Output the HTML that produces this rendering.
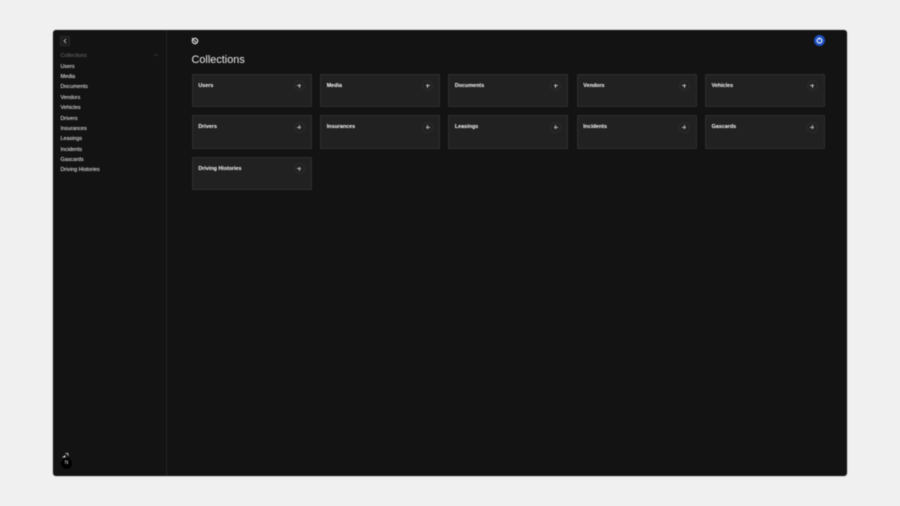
<!DOCTYPE html>
<html>
<head>
<meta charset="utf-8">
<style>
html,body{margin:0;padding:0;width:900px;height:506px;overflow:hidden;background:#f0f0f0;font-family:"Liberation Sans",sans-serif}
#root{position:absolute;left:0;top:0;width:900px;height:506px;filter:blur(.4px)}
.win{position:absolute;left:53px;top:30px;width:794px;height:446px;background:#131313;border-radius:3px;box-shadow:0 0 1px #888}
.div{position:absolute;left:166px;top:30px;width:1px;height:446px;background:#222}
.nav{position:absolute;left:60.5px;font-size:5.4px;line-height:8px;color:#fff;white-space:nowrap}
.card{position:absolute;width:120px;height:33.5px;background:#212121;box-shadow:inset 0 0 0 1px #2f2f2f;border-radius:1.5px;box-sizing:border-box}
.card b{position:absolute;left:6.7px;top:8.2px;font-size:5.4px;line-height:8px;color:#fff;font-weight:700;white-space:nowrap}
.plus{position:absolute;right:7px;top:6.5px;width:11px;height:11px;border-radius:50%;box-shadow:inset 0 0 0 1px #2c2c2c}
.plus:before{content:"";position:absolute;left:3.5px;top:5px;width:4px;height:1px;background:#b4b4b4}
.plus:after{content:"";position:absolute;left:5px;top:3.5px;width:1px;height:4px;background:#b4b4b4}
</style>
</head>
<body>
<div id="root">
<div class="win"></div>
<div class="div"></div>

<div style="position:absolute;left:60px;top:36px;width:10px;height:10px;background:#1c1c1c;box-shadow:inset 0 0 0 1px #2a2a2a;border-radius:1px"></div>
<svg style="position:absolute;left:60px;top:36px" width="10" height="10" viewBox="0 0 10 10"><path d="M6 3 L4 5 L6 7" fill="none" stroke="#ccc" stroke-width=".8"/></svg>

<div class="nav" style="top:52.2px;color:#707070">Collections</div>
<svg style="position:absolute;left:153px;top:53px" width="6" height="4" viewBox="0 0 6 4"><path d="M1 2.6 L3 1.4 L5 2.6" fill="none" stroke="#444" stroke-width=".6"/></svg>
<div class="nav" style="top:62.6px">Users</div>
<div class="nav" style="top:73px">Media</div>
<div class="nav" style="top:83.4px">Documents</div>
<div class="nav" style="top:93.8px">Vendors</div>
<div class="nav" style="top:104.2px">Vehicles</div>
<div class="nav" style="top:114.5px">Drivers</div>
<div class="nav" style="top:124.9px">Insurances</div>
<div class="nav" style="top:135.3px">Leasings</div>
<div class="nav" style="top:145.6px">Incidents</div>
<div class="nav" style="top:156px">Gascards</div>
<div class="nav" style="top:166.3px">Driving Histories</div>

<svg style="position:absolute;left:61px;top:452px" width="8" height="7" viewBox="0 0 8 7"><path d="M1 5.5 L4.4 3 L4.4 5.5 Z" fill="#ddd"/><path d="M4.5 1.5 L7 1.5 L7 4" fill="none" stroke="#bbb" stroke-width=".9"/></svg>
<div style="position:absolute;left:61px;top:457.5px;width:11px;height:11px;border-radius:50%;background:#000"></div>
<div style="position:absolute;left:61px;top:457.6px;width:11px;height:11px;line-height:11px;text-align:center;font-size:5px;color:#ddd">N</div>

<svg style="position:absolute;left:191px;top:37px" width="8" height="8" viewBox="0 0 8 8"><circle cx="4" cy="4" r="2.7" fill="none" stroke="#efefef" stroke-width="1.1"/><path d="M2.6 3 L5.2 5.2 M.9 1.2 L2.6 2.4" stroke="#efefef" stroke-width="1" fill="none"/></svg>
<div style="position:absolute;left:191.5px;top:52.7px;font-size:10.9px;line-height:14px;color:#ececec;white-space:nowrap">Collections</div>

<div style="position:absolute;left:814px;top:35px;width:11px;height:11px;border-radius:50%;background:#1d50c0"></div>
<svg style="position:absolute;left:814px;top:35px" width="11" height="11" viewBox="0 0 11 11"><circle cx="5.5" cy="5.6" r="2.4" fill="none" stroke="#e4ecff" stroke-width="1.2"/><path d="M5.5 2.6 L5.5 5" stroke="#e4ecff" stroke-width="1"/></svg>

<div class="card" style="left:191.7px;top:73.7px"><b>Users</b><span class="plus"></span></div>
<div class="card" style="left:320px;top:73.7px"><b>Media</b><span class="plus"></span></div>
<div class="card" style="left:448.2px;top:73.7px"><b>Documents</b><span class="plus"></span></div>
<div class="card" style="left:576.6px;top:73.7px"><b>Vendors</b><span class="plus"></span></div>
<div class="card" style="left:704.9px;top:73.7px"><b>Vehicles</b><span class="plus"></span></div>

<div class="card" style="left:191.7px;top:115.3px"><b>Drivers</b><span class="plus"></span></div>
<div class="card" style="left:320px;top:115.3px"><b>Insurances</b><span class="plus"></span></div>
<div class="card" style="left:448.2px;top:115.3px"><b>Leasings</b><span class="plus"></span></div>
<div class="card" style="left:576.6px;top:115.3px"><b>Incidents</b><span class="plus"></span></div>
<div class="card" style="left:704.9px;top:115.3px"><b>Gascards</b><span class="plus"></span></div>

<div class="card" style="left:191.7px;top:156.8px"><b>Driving Histories</b><span class="plus"></span></div>
</div>
</body>
</html>
